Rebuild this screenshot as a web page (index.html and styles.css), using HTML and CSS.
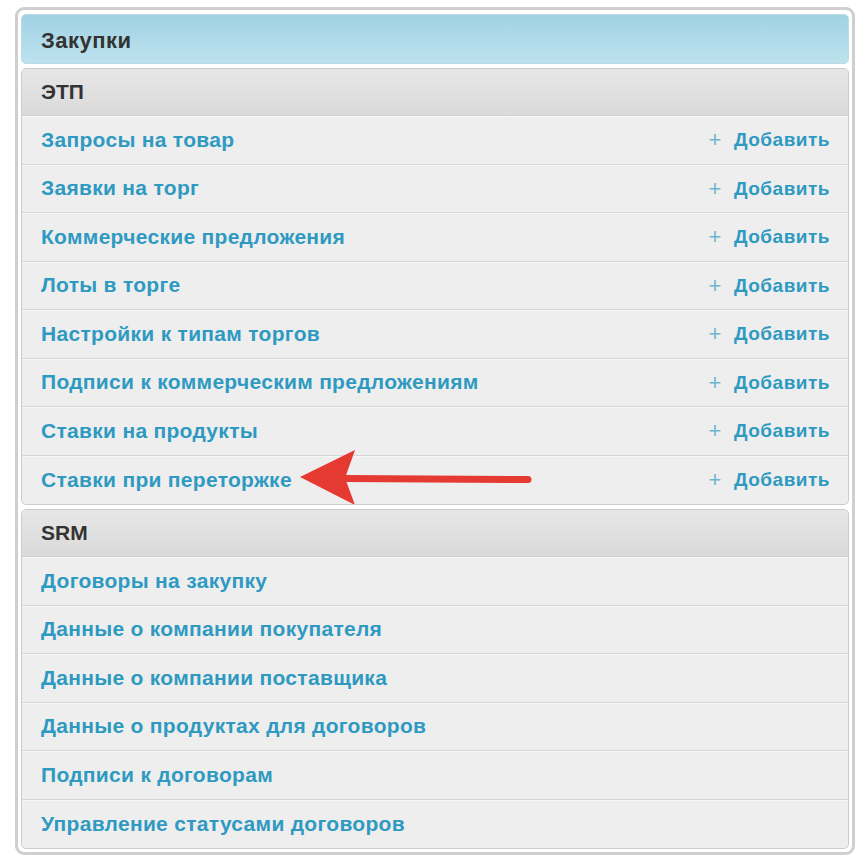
FILE: index.html
```html
<!DOCTYPE html>
<html lang="ru">
<head>
<meta charset="utf-8">
<title>Закупки</title>
<link rel="stylesheet" href="styles.css">
</head>
<body>
<div class="app">
  <div class="caption">Закупки</div>
  <div class="module">
    <div class="module-head">ЭТП</div>
    <div class="row"><a class="link">Запросы на товар</a><a class="add"><span class="plus">+</span>Добавить</a></div>
    <div class="row"><a class="link">Заявки на торг</a><a class="add"><span class="plus">+</span>Добавить</a></div>
    <div class="row"><a class="link">Коммерческие предложения</a><a class="add"><span class="plus">+</span>Добавить</a></div>
    <div class="row"><a class="link">Лоты в торге</a><a class="add"><span class="plus">+</span>Добавить</a></div>
    <div class="row"><a class="link">Настройки к типам торгов</a><a class="add"><span class="plus">+</span>Добавить</a></div>
    <div class="row"><a class="link">Подписи к коммерческим предложениям</a><a class="add"><span class="plus">+</span>Добавить</a></div>
    <div class="row"><a class="link">Ставки на продукты</a><a class="add"><span class="plus">+</span>Добавить</a></div>
    <div class="row last"><a class="link">Ставки при переторжке</a><a class="add"><span class="plus">+</span>Добавить</a>
      <svg class="arrow" width="240" height="60" viewBox="0 0 240 60">
        <line x1="45" y1="28.5" x2="228" y2="29.5" stroke="#e43a31" stroke-width="7" stroke-linecap="round"/>
        <polygon points="0,27 55,0 45,28 55,55" fill="#e43a31"/>
      </svg>
    </div>
  </div>
  <div class="module">
    <div class="module-head">SRM</div>
    <div class="row"><a class="link">Договоры на закупку</a></div>
    <div class="row"><a class="link">Данные о компании покупателя</a></div>
    <div class="row"><a class="link">Данные о компании поставщика</a></div>
    <div class="row"><a class="link">Данные о продуктах для договоров</a></div>
    <div class="row"><a class="link">Подписи к договорам</a></div>
    <div class="row last"><a class="link">Управление статусами договоров</a></div>
  </div>
</div>
</body>
</html>
```
FILE: styles.css
```css
* { box-sizing: border-box; }
body {
  margin: 0;
  background: #fff;
  font-family: "Liberation Sans", Arial, sans-serif;
}
.app {
  margin: 7px 0 0 15px;
  width: 840px;
  height: 848px;
  border: 3px solid #cfcfcf;
  border-radius: 9px;
  padding: 4px 3px 3px 3px;
}
.caption {
  height: 50px;
  border: 1px solid #b9dbe8;
  border-radius: 5px;
  background: linear-gradient(#a0d2e4, #bde2ee);
  color: #333;
  font-weight: bold;
  font-size: 22px;
  letter-spacing: 0.5px;
  display: flex;
  align-items: center;
  padding: 3px 0 0 19px;
}
.module {
  margin-top: 4px;
  border: 1px solid #cccccc;
  border-radius: 5px;
  background: #eeeeee;
  overflow: hidden;
}
.module-head {
  height: 47px;
  background: linear-gradient(#e7e7e7, #dadada);
  border-bottom: 1px solid #d0d0d0;
  color: #333;
  font-weight: bold;
  font-size: 21px;
  display: flex;
  align-items: center;
  padding: 0 0 1px 19px;
}
.row {
  position: relative;
  height: 48.5px;
  border-bottom: 1px solid #d6d6d6;
  box-shadow: inset 0 1px 0 #f7f7f7;
  display: flex;
  align-items: center;
  justify-content: space-between;
  padding: 0 18px 0 19px;
  font-weight: bold;
  font-size: 21px;
  letter-spacing: 0.3px;
  color: #2e9ac2;
}
.row.last { border-bottom: none; }
.link { color: #2e9ac2; }
.add {
  color: #2e9ac2;
  display: flex;
  align-items: center;
  font-size: 19px;
  letter-spacing: 0.5px;
  padding-top: 1px;
}
.plus {
  font-weight: normal;
  color: #6db6cf;
  font-size: 22px;
  margin-right: 12px;
}
.arrow {
  position: absolute;
  left: 278px;
  top: -6px;
}
```
